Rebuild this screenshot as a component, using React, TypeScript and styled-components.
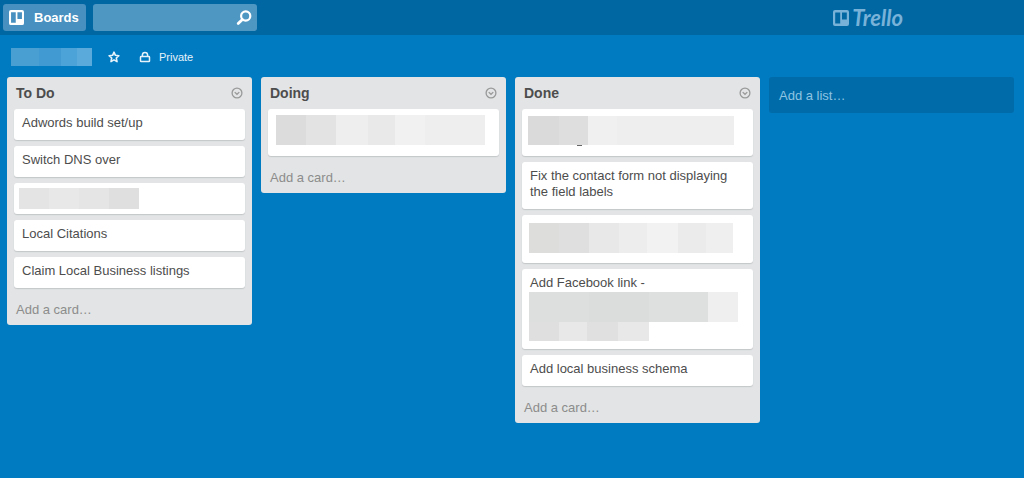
import React from "react";
import styled, { createGlobalStyle } from "styled-components";

const GlobalStyle = createGlobalStyle`
  *, *::before, *::after { box-sizing: border-box; }
  html { height: 100%; }
  body {
    margin: 0;
    min-height: 100%;
    background: #007ac1;
    color: #4d4d4d;
    font-family: "Liberation Sans", Arial, Helvetica, sans-serif;
    font-size: 13px;
    line-height: 16px;
  }
  button, input { font: inherit; }
`;

const Header = styled.header`
  display: flex;
  align-items: center;
  gap: 7px;
  height: 35px;
  padding: 0 121px 0 3px;
  background: #0067a3;
`;

const BoardsButton = styled.button`
  display: flex;
  align-items: center;
  gap: 10px;
  height: 27px;
  padding: 0 7px 0 6px;
  border: 0;
  border-radius: 3px;
  background: #4790bf;
  color: #fff;
  font-weight: bold;
`;

const SearchForm = styled.form`
  display: flex;
  align-items: center;
  width: 164px;
  height: 27px;
  border-radius: 3px;
  background: #4e97c3;
`;

const SearchInput = styled.input`
  flex: 1;
  min-width: 0;
  height: 100%;
  padding: 0 8px;
  border: 0;
  outline: 0;
  background: transparent;
  color: #fff;
`;

const IconButton = styled.button`
  display: flex;
  align-items: center;
  padding: 0;
  border: 0;
  background: transparent;
  color: inherit;
`;

const SearchButton = styled(IconButton)`
  padding-right: 5px;
  color: #fff;
`;

const Logo = styled.a`
  display: flex;
  align-items: center;
  gap: 3px;
  margin-left: auto;
  color: #78b2d8;
  font-family: Lato, "Liberation Sans", sans-serif;
  font-size: 22px;
  font-style: italic;
  font-weight: bold;
  line-height: 20px;
  text-decoration: none;
`;

const BoardBar = styled.div`
  display: flex;
  align-items: center;
  height: 42px;
  padding: 2px 11px 0;
  color: #e6f3fa;
`;

const BoardName = styled.h1`
  width: 81px;
  margin: 0 16px 0 0;
`;

const PrivacyButton = styled(IconButton)`
  gap: 8px;
  margin-left: 19px;
  font-size: 11px;
`;

const Board = styled.main`
  display: grid;
  grid-template-columns: repeat(4, minmax(0, 1fr));
  align-items: start;
  gap: 9px;
  padding: 0 10px 16px 7px;
`;

const List = styled.section`
  padding: 0 7px;
  border-radius: 3px;
  background: #e2e4e5;
`;

const ListHeader = styled.header`
  display: flex;
  align-items: center;
  justify-content: space-between;
  height: 32px;
  padding: 0 2px;
  color: #999;
`;

const ListTitle = styled.h2`
  margin: 0;
  color: #4d4d4d;
  font-size: 14px;
  line-height: 16px;
`;

const Cards = styled.ul`
  display: flex;
  flex-direction: column;
  gap: 6px;
  margin: 0;
  padding: 0;
  list-style: none;
`;

const CardItem = styled.li<{ $inset?: string }>`
  padding: ${(p) => p.$inset ?? "6px 8px 9px"};
  border-radius: 3px;
  background: #fff;
  box-shadow: 0 1px 1px #c4c7c8;
`;

const AddCard = styled.button`
  display: block;
  width: 100%;
  height: 37px;
  padding: 6px 2px 0;
  border: 0;
  background: transparent;
  color: #8c8c8c;
  text-align: left;
`;

const AddList = styled.button`
  height: 36px;
  padding: 2px 10px 0;
  border: 0;
  border-radius: 3px;
  background: #006ba9;
  color: #8fc4e2;
  text-align: left;
`;

const Mosaic = styled.span<{ $height: number }>`
  display: flex;
  height: ${(p) => p.$height}px;
`;

const Tile = styled.span<{ $width: number; $color: string }>`
  flex: 0 1 ${(p) => p.$width}px;
  background: ${(p) => p.$color};
`;

const Descender = styled.span`
  display: block;
  width: 5px;
  height: 1px;
  margin-left: 49px;
  background: #666;
`;

type TileData = [width: number, color: string];
type Strip = { height: number; tiles: TileData[] };
type CardData = {
  text?: string;
  inset?: string;
  strips?: Strip[];
  descender?: boolean;
};
type ListData = { title: string; cards: CardData[] };

const boardName: Strip = {
  height: 18,
  tiles: [[28, "#4a9fd2"], [22, "#419bd2"], [16, "#4ca3d7"], [15, "#5aaadb"]],
};

const lists: ListData[] = [
  {
    title: "To Do",
    cards: [
      { text: "Adwords build set/up" },
      { text: "Switch DNS over" },
      {
        inset: "5px 5px 5px",
        strips: [
          { height: 21, tiles: [[30, "#e4e4e4"], [30, "#e8e8e8"], [30, "#e5e5e5"], [30, "#dfdfdf"]] },
        ],
      },
      { text: "Local Citations" },
      { text: "Claim Local Business listings" },
    ],
  },
  {
    title: "Doing",
    cards: [
      {
        inset: "6px 8px 11px",
        strips: [
          {
            height: 30,
            tiles: [[30, "#dcdcdc"], [30, "#e3e3e3"], [32, "#eeeeee"], [27, "#e9e9e9"], [30, "#f1f1f1"], [60, "#eeeeee"]],
          },
        ],
      },
    ],
  },
  {
    title: "Done",
    cards: [
      {
        inset: "7px 6px 10px",
        descender: true,
        strips: [{ height: 29, tiles: [[31, "#dadada"], [29, "#dedede"], [29, "#f0f0f0"], [117, "#eeeeee"]] }],
      },
      { text: "Fix the contact form not displaying the field labels" },
      {
        inset: "8px 7px 10px",
        strips: [
          {
            height: 30,
            tiles: [[30, "#dddddc"], [30, "#dfdfdf"], [30, "#e8e8e8"], [28, "#ededed"], [31, "#f2f2f2"], [28, "#ebebeb"], [27, "#efefef"]],
          },
        ],
      },
      {
        text: "Add Facebook link -",
        inset: "6px 7px 8px",
        strips: [
          { height: 30, tiles: [[60, "#dddede"], [60, "#dbdddd"], [59, "#dedfdf"], [30, "#efefef"]] },
          { height: 19, tiles: [[30, "#dfdfdf"], [28, "#e8e8e8"], [31, "#e0e0e0"], [31, "#e8e8e8"]] },
        ],
      },
      { text: "Add local business schema" },
    ],
  },
];

const MosaicStrip = ({ strip }: { strip: Strip }) => (
  <Mosaic $height={strip.height} aria-hidden="true">
    {strip.tiles.map(([width, color], i) => (
      <Tile key={i} $width={width} $color={color} />
    ))}
  </Mosaic>
);

const CardText = styled.span<{ $spaced?: boolean }>`
  display: block;
  padding: ${(p) => (p.$spaced ? "0 1px 1px" : "0")};
`;

const BoardMark = ({ size }: { size: number }) => (
  <svg width={size} height={size} viewBox="0 0 16 16" aria-hidden="true">
    <path
      fill="currentColor"
      fillRule="evenodd"
      d="M2 0h12a2 2 0 0 1 2 2v12a2 2 0 0 1-2 2H2a2 2 0 0 1-2-2V2a2 2 0 0 1 2-2zM2.2 2.4v11.2h5V2.4zM9 2.4v7.2h4.8V2.4z"
    />
  </svg>
);

const SearchIcon = () => (
  <svg width="16" height="16" viewBox="0 0 16 16" fill="none" stroke="currentColor" aria-hidden="true">
    <circle cx="9.7" cy="6" r="4.6" strokeWidth="2.2" />
    <path d="M6.4 9.4 2.2 13.6" strokeWidth="2.8" strokeLinecap="round" />
  </svg>
);

const StarIcon = () => (
  <svg width="12" height="12" viewBox="0 0 12 12" fill="none" stroke="currentColor" strokeWidth="1.6" strokeLinejoin="round" aria-hidden="true">
    <path d="M6 1.2 7.4 4.3l3.5.4-2.6 2.3.7 3.6L6 8.9 3 10.6 3.7 7 1.1 4.7l3.5-.4z" />
  </svg>
);

const LockIcon = () => (
  <svg width="12" height="12" viewBox="0 0 12 12" fill="none" stroke="currentColor" strokeWidth="1.5" aria-hidden="true">
    <rect x="1.5" y="5.6" width="9" height="5" rx="0.6" />
    <path d="M3.4 5.4V4a2.6 2.6 0 0 1 5.2 0v1.4" />
  </svg>
);

const MenuIcon = () => (
  <svg width="12" height="12" viewBox="0 0 12 12" fill="none" stroke="currentColor" strokeWidth="1.3" aria-hidden="true">
    <circle cx="6" cy="6" r="4.9" />
    <path d="M3.7 5.1 6 7.3l2.3-2.2" />
  </svg>
);

export default function App() {
  return (
    <>
      <GlobalStyle />
      <Header>
        <BoardsButton type="button">
          <BoardMark size={15} />
          Boards
        </BoardsButton>
        <SearchForm role="search">
          <SearchInput type="text" aria-label="Search" />
          <SearchButton type="button" aria-label="Submit search">
            <SearchIcon />
          </SearchButton>
        </SearchForm>
        <Logo href="#">
          <BoardMark size={16} />
          Trello
        </Logo>
      </Header>
      <BoardBar>
        <BoardName aria-label="Board name">
          <MosaicStrip strip={boardName} />
        </BoardName>
        <IconButton type="button" aria-label="Star this board">
          <StarIcon />
        </IconButton>
        <PrivacyButton type="button">
          <LockIcon />
          Private
        </PrivacyButton>
      </BoardBar>
      <Board>
        {lists.map((list) => (
          <List key={list.title}>
            <ListHeader>
              <ListTitle>{list.title}</ListTitle>
              <IconButton type="button" aria-label={`${list.title} list actions`}>
                <MenuIcon />
              </IconButton>
            </ListHeader>
            <Cards>
              {list.cards.map((card, i) => (
                <CardItem key={i} $inset={card.inset}>
                  {card.text && <CardText $spaced={!!card.strips}>{card.text}</CardText>}
                  {card.strips?.map((strip, j) => <MosaicStrip key={j} strip={strip} />)}
                  {card.descender && <Descender />}
                </CardItem>
              ))}
            </Cards>
            <AddCard type="button">Add a card…</AddCard>
          </List>
        ))}
        <AddList type="button">Add a list…</AddList>
      </Board>
    </>
  );
}
